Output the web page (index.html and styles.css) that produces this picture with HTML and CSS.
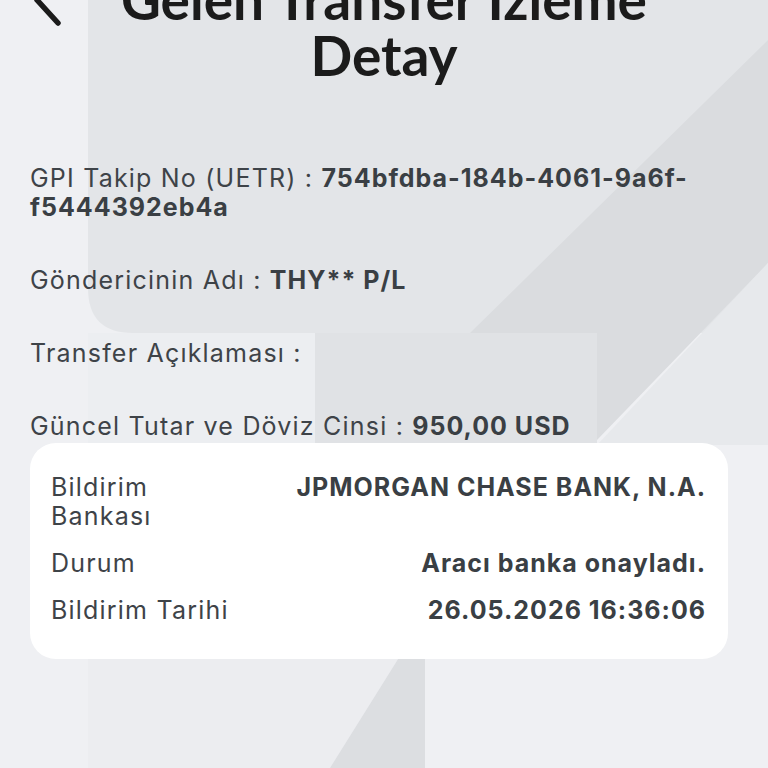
FILE: index.html
```html
<!DOCTYPE html>
<html lang="tr">
<head>
<meta charset="utf-8">
<title>Gelen Transfer İzleme Detay</title>
<link rel="stylesheet" href="styles.css">
</head>
<body>
<div class="screen">
  <svg class="backdrop" width="768" height="768" viewBox="0 0 768 768" aria-hidden="true">
    <rect x="0" y="0" width="768" height="768" fill="#eff0f3"/>
    <path d="M88 -10 H768 V333 H133 Q88 333 88 288 Z" fill="#e3e5e8"/>
    <polygon points="768,40 768,263 597,440 315,440 315,333 470,333" fill="#dadcdf"/>
    <polygon points="315,333 597,333 597,445 315,445" fill="#e0e2e5"/>
    <polygon points="768,263 768,445 597,445" fill="#e7e9ec"/>
    <rect x="88" y="333" width="227" height="112" fill="#eceef1"/>
    <rect x="88" y="640" width="337" height="128" fill="#ecedf0"/>
    <polygon points="425,640 425,768 330,768 410,640" fill="#dcdee1"/>
  </svg>

  <header class="topbar">
    <div class="back">
      <svg width="32" height="52" viewBox="0 0 32 52" aria-hidden="true">
        <polyline points="25,3 4,26 25,49" fill="none" stroke="#1b1b1b" stroke-width="5.5" stroke-linecap="round" stroke-linejoin="round"/>
      </svg>
    </div>
    <h1 class="title">Gelen Transfer İzleme<br>Detay</h1>
    <div class="spacer"></div>
  </header>

  <section class="details">
    <p class="item"><span class="label">GPI Takip No (UETR) : </span><span class="value">754bfdba-184b-4061-9a6f-<br>f5444392eb4a</span></p>
    <p class="item"><span class="label">Göndericinin Adı : </span><span class="value">THY** P/L</span></p>
    <p class="item"><span class="label">Transfer Açıklaması : </span><span class="value"></span></p>
    <p class="item"><span class="label">Güncel Tutar ve Döviz Cinsi : </span><span class="value">950,00 USD</span></p>
  </section>

  <section class="card">
    <div class="row">
      <div class="c-label">Bildirim<br>Bankası</div>
      <div class="c-value">JPMORGAN CHASE BANK, N.A.</div>
    </div>
    <div class="row">
      <div class="c-label">Durum</div>
      <div class="c-value">Aracı banka onayladı.</div>
    </div>
    <div class="row">
      <div class="c-label">Bildirim Tarihi</div>
      <div class="c-value">26.05.2026 16:36:06</div>
    </div>
  </section>
</div>
</body>
</html>
```

FILE: styles.css
```css
* { box-sizing: border-box; }

html, body {
  margin: 0;
  padding: 0;
  width: 768px;
  height: 768px;
  overflow: hidden;
  background: #eff0f3;
}

body {
  font-family: "Inter", "Open Sans", "Liberation Sans", sans-serif;
  color: #3e4348;
}

.screen {
  position: relative;
  width: 768px;
  height: 768px;
  overflow: hidden;
}

.backdrop {
  position: absolute;
  left: 0;
  top: 0;
  z-index: 0;
}

.topbar,
.details,
.card {
  position: relative;
  z-index: 1;
}

.topbar {
  display: grid;
  grid-template-columns: 88px 1fr 88px;
  align-items: start;
  margin-top: -29px;
}

.back {
  padding-left: 33px;
  padding-top: 3px;
  height: 56px;
}

.back svg { display: block; }

.title {
  margin: 0;
  font-family: "Lato", "Open Sans", sans-serif;
  font-size: 55px;
  line-height: 56px;
  font-weight: 700;
  color: #1b1b1b;
  text-align: center;
}

.details {
  display: flex;
  flex-direction: column;
  gap: 44px;
  padding: 0 30px;
  margin-top: 81px;
}

.item {
  margin: 0;
  font-size: 25px;
  line-height: 29px;
}

.label {
  font-weight: 400;
  letter-spacing: 1.2px;
}

.value {
  font-weight: 700;
  color: #3a3f44;
  letter-spacing: 1px;
}

.card {
  margin: 2px 40px 0 30px;
  background: #ffffff;
  border-radius: 26px;
  padding: 30px 22px 34px 21px;
  display: flex;
  flex-direction: column;
  gap: 18px;
}

.row {
  display: grid;
  grid-template-columns: 190px 1fr;
  align-items: start;
  font-size: 25px;
  line-height: 29px;
}

.c-label {
  font-weight: 400;
  color: #3e4348;
  letter-spacing: 1.2px;
}

.c-value {
  font-weight: 700;
  color: #3a3f44;
  text-align: right;
  letter-spacing: 1px;
}
```
